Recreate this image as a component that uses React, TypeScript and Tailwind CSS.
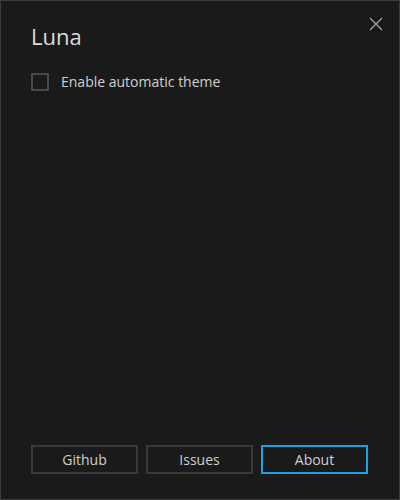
export default function App() {
  return (
    <div
      className="relative flex h-[500px] w-[400px] flex-col border border-[#3c3c3c] bg-[#1a1a1a] text-[#d4d4d4]"
      style={{ fontFamily: '"Open Sans", "Noto Sans", sans-serif' }}
    >
      <button className="absolute right-[16px] top-[16px] text-[#a8a8a8]">
        <svg width="14" height="14" viewBox="0 0 14 14" stroke="currentColor" strokeWidth="1.2">
          <path d="M1 1 L13 13 M13 1 L1 13" />
        </svg>
      </button>
      <div className="px-[30px] pt-[19px]">
        <h1 className="text-[22px] leading-[32px] text-[#dcdcdc]">Luna</h1>
        <label className="mt-[19px] flex items-center gap-[12px]">
          <span className="h-[18px] w-[18px] border-2 border-[#4a4a4a]" />
          <span className="text-[14px] text-[#d0d0d0]">Enable automatic theme</span>
        </label>
      </div>
      <div className="mt-auto flex gap-[8px] px-[30px] pb-[25px]">
        <button className="h-[29px] w-[107px] border-2 border-[#3a3a3a] text-[14px] text-[#cfcfcf]">Github</button>
        <button className="h-[29px] w-[107px] border-2 border-[#3a3a3a] text-[14px] text-[#cfcfcf]">Issues</button>
        <button className="h-[29px] w-[107px] border-2 border-[#1ba1e2] text-[14px] text-[#cfcfcf]">About</button>
      </div>
    </div>
  );
}
